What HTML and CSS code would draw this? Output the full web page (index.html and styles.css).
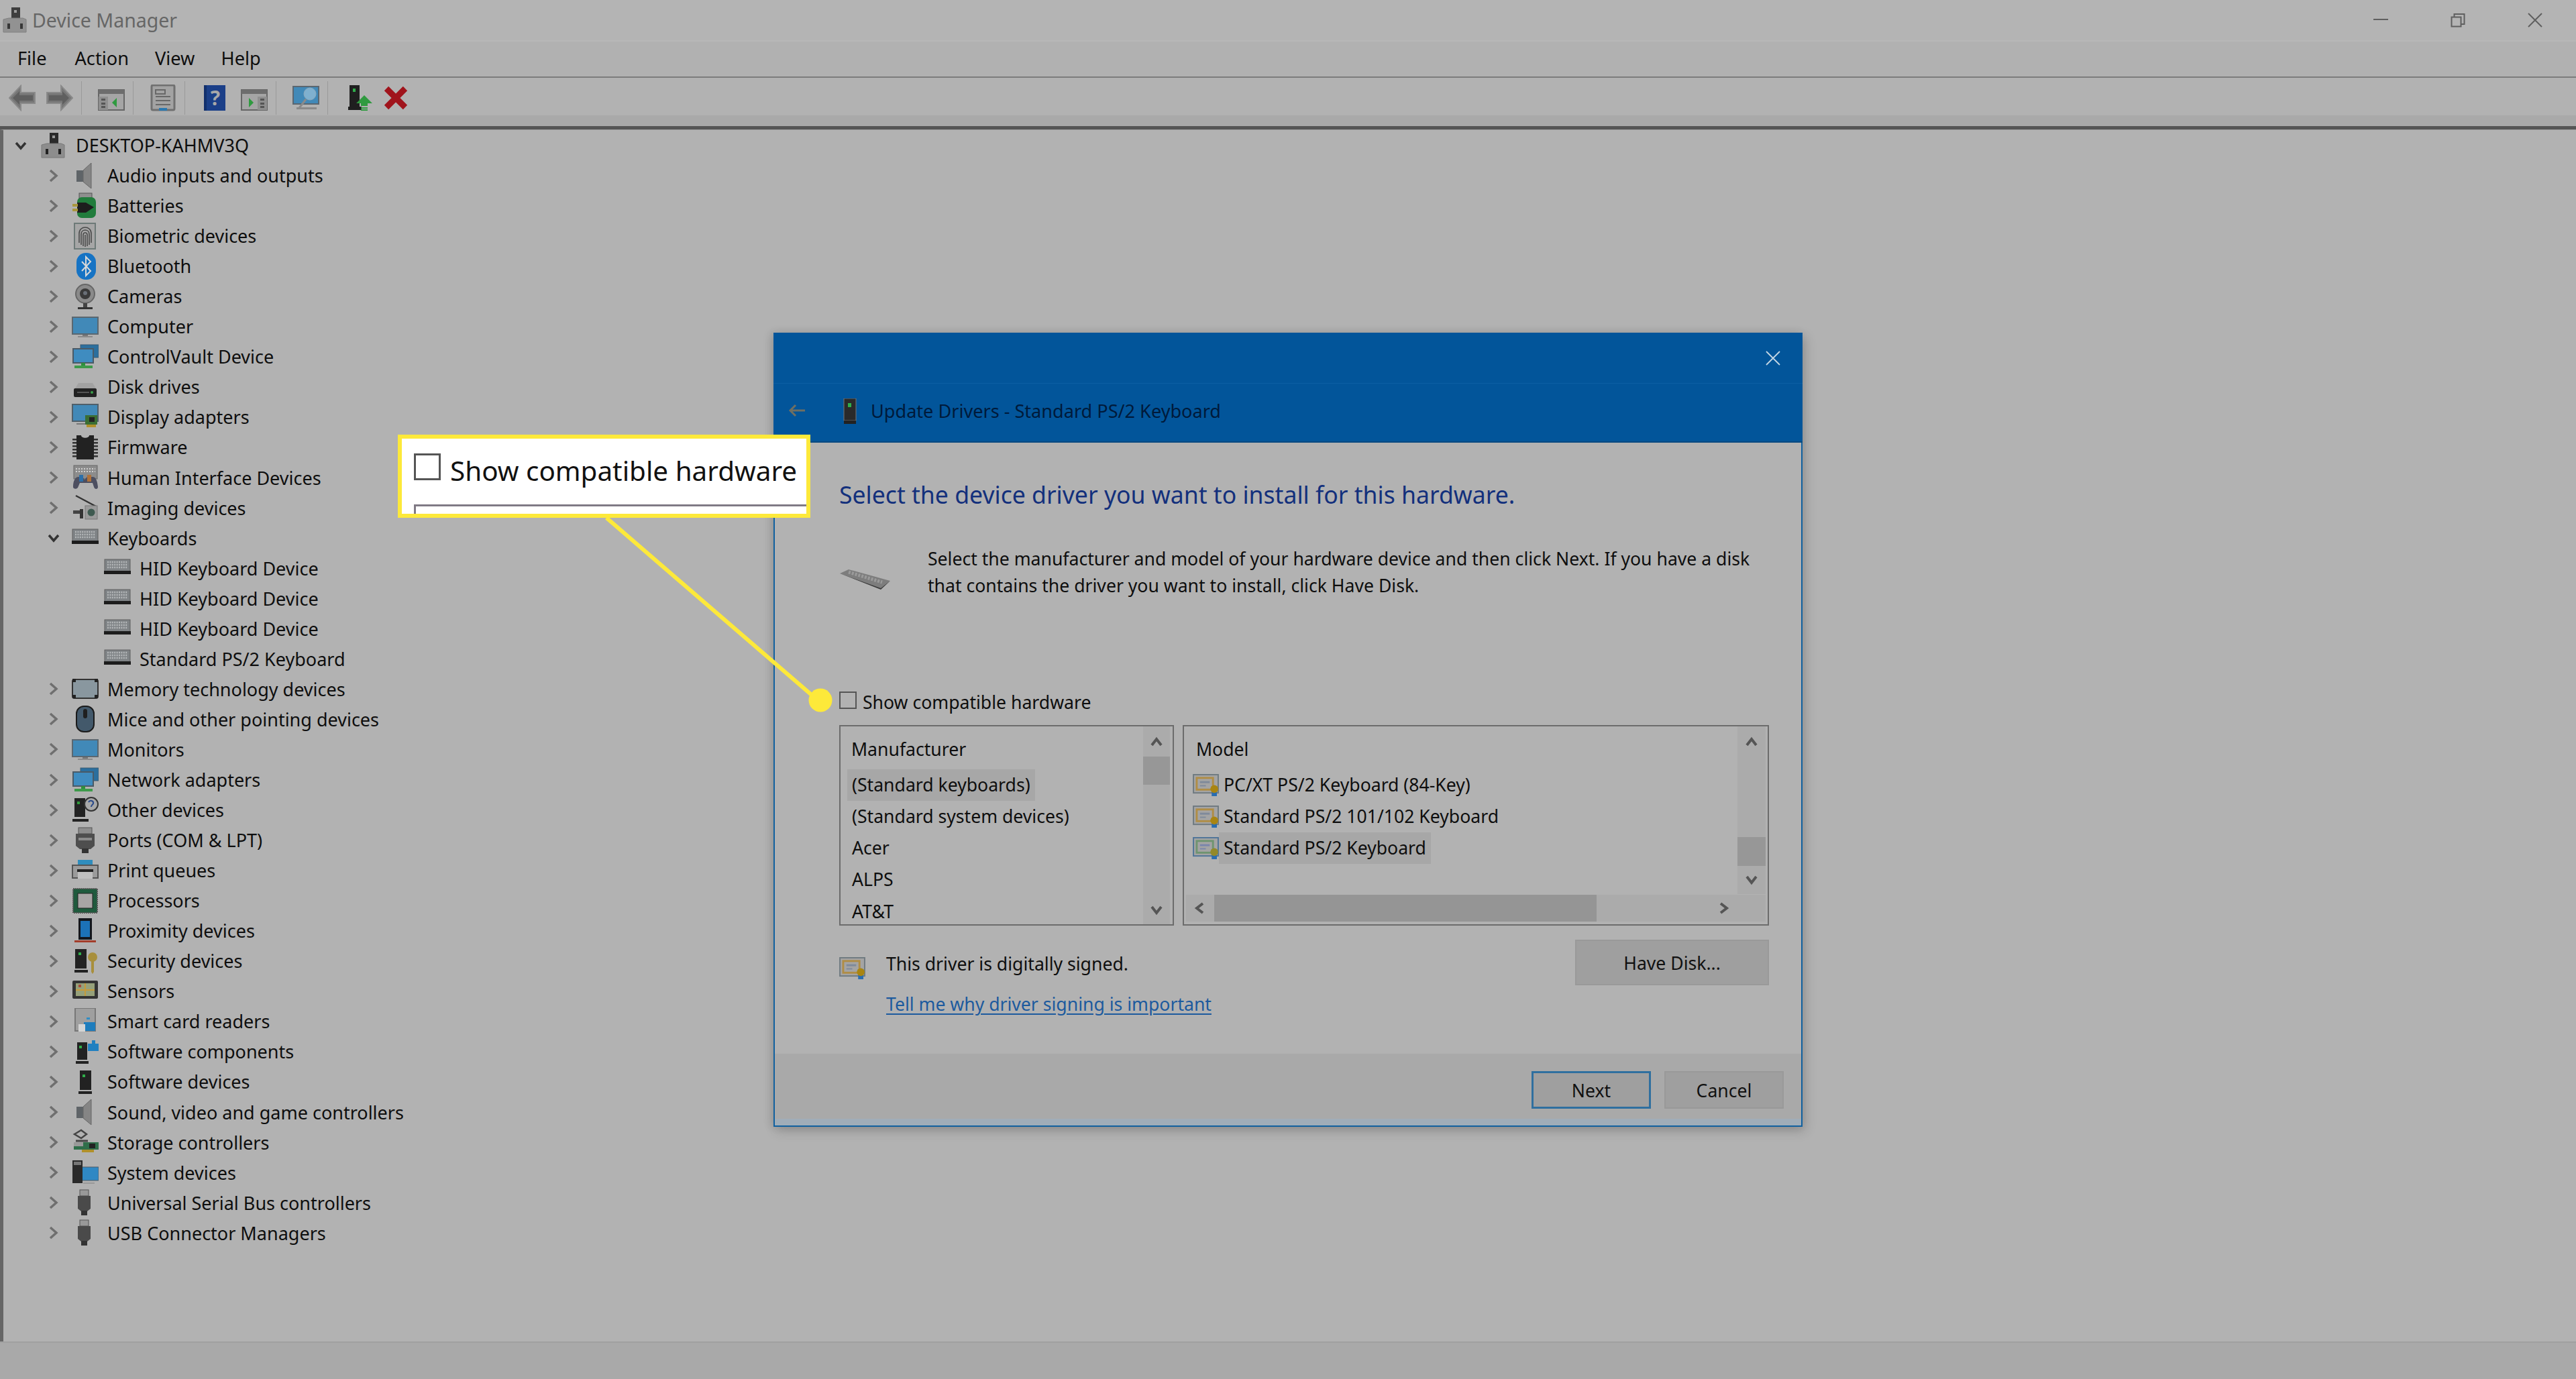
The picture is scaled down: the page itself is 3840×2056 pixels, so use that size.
FILE: index.html
```html
<!DOCTYPE html>
<html lang="en">
<head>
<meta charset="utf-8">
<title>Device Manager</title>
<link rel="stylesheet" href="styles.css">
</head>
<body>
<svg class="defs" aria-hidden="true">
<symbol id="i-root" viewBox="0 0 40 40"><rect x="15" y="1" width="13" height="20" fill="#2a2a2a"/><rect x="19" y="5" width="4" height="4" fill="#999"/><path d="M3 38V19l8-2h21l5 2v19z" fill="#8d8d8d" stroke="#777"/><rect x="9" y="25" width="4" height="8" fill="#222"/><rect x="28" y="25" width="4" height="8" fill="#222"/></symbol>
<symbol id="i-speaker" viewBox="0 0 40 40"><rect x="7" y="12" width="10" height="17" fill="#5f6468"/><path d="M17 12 29 1v38L17 29z" fill="#858585" stroke="#666"/></symbol>
<symbol id="i-battery" viewBox="0 0 40 40"><rect x="11" y="1" width="19" height="9" fill="#8f8f8f" stroke="#555"/><rect x="8" y="7" width="28" height="31" rx="7" fill="#217c3c"/><path d="M8 15h13l12 7-12 8H8z" fill="#1d1d1d"/><rect x="1" y="17" width="8" height="4" fill="#a8963c"/><rect x="1" y="24" width="8" height="4" fill="#a8963c"/></symbol>
<symbol id="i-finger" viewBox="0 0 40 40"><rect x="4" y="1" width="31" height="38" fill="#a6a6a6" stroke="#6d7a78" stroke-width="2"/><g fill="none" stroke="#4a4a4a" stroke-width="1.6"><path d="M11 30V16c0-12 18-12 18 0v14"/><path d="M14 33V17c0-8 12-8 12 0v16"/><path d="M17 35V18c0-4 6-4 6 0v17"/><path d="M20 36V18"/></g></symbol>
<symbol id="i-bt" viewBox="0 0 40 40"><rect x="7" y="0" width="29" height="40" rx="14" fill="#1673c4"/><path d="M15 13l13 14-7 7V6l7 7-13 14" fill="none" stroke="#d8d8d8" stroke-width="2"/></symbol>
<symbol id="i-cam" viewBox="0 0 40 40"><circle cx="20" cy="16" r="14" fill="#8a8a8a" stroke="#666" stroke-width="2"/><circle cx="20" cy="16" r="8" fill="#3a3a3a"/><circle cx="20" cy="15" r="3" fill="#6a7078"/><rect x="17" y="30" width="6" height="6" fill="#444"/><rect x="9" y="36" width="22" height="3" fill="#333"/></symbol>
<symbol id="i-mon" viewBox="0 0 40 40"><rect x="1" y="6" width="38" height="25" fill="#4189b8" stroke="#5b6770" stroke-width="2"/><rect x="16" y="32" width="8" height="2" fill="#777"/><rect x="9" y="34" width="22" height="2" fill="#8a8a8a"/></symbol>
<symbol id="i-net" viewBox="0 0 40 40"><rect x="13" y="2" width="27" height="19" fill="#2b6f9e" stroke="#3a5a70"/><rect x="2" y="8" width="30" height="21" fill="#3f8cc0" stroke="#4a5a66" stroke-width="2"/><rect x="14" y="29" width="6" height="4" fill="#2f8f3f"/><rect x="4" y="33" width="27" height="4" fill="#3d9a4a"/></symbol>
<symbol id="i-disk" viewBox="0 0 40 40"><path d="M5 22 10 14h21l5 8z" fill="#a2a2a2"/><rect x="3" y="22" width="34" height="13" rx="2" fill="#222"/><rect x="8" y="27" width="18" height="2" fill="#555"/><circle cx="30" cy="28" r="2" fill="#3aa04a"/></symbol>
<symbol id="i-disp" viewBox="0 0 40 40"><rect x="1" y="1" width="38" height="25" fill="#4189b8" stroke="#4f5f6a" stroke-width="2"/><rect x="20" y="17" width="18" height="14" fill="#3a6e34"/><rect x="26" y="20" width="8" height="7" fill="#222"/><rect x="22" y="31" width="14" height="4" fill="#b0902a"/><rect x="7" y="29" width="13" height="2" fill="#777"/></symbol>
<symbol id="i-chip" viewBox="0 0 40 40"><path d="M7 2h7c0 5 12 5 12 0h7v36H7z" fill="#222"/><path d="M4 7v28M36 7v28" stroke="#333" stroke-width="6" stroke-dasharray="2.5 2.5"/></symbol>
<symbol id="i-hid" viewBox="0 0 40 40"><rect x="3" y="2" width="35" height="20" fill="#8c8c8c" stroke="#666"/><path d="M6 7h29M6 11h29" stroke="#d0d0d0" stroke-dasharray="2 2" stroke-width="2"/><path d="M2 34c0-9 3-15 8-15h6l3 4 4-4h8c5 0 7 6 8 15 0 4-5 4-6 0l-2-6H12l-3 7c-2 3-7 2-7-1z" fill="#4d4f60"/><rect x="11" y="16" width="6" height="10" fill="#2d6fa8"/><rect x="23" y="16" width="6" height="10" fill="#b0723a"/></symbol>
<symbol id="i-img" viewBox="0 0 40 40"><path d="M6 2 36 18" stroke="#333" stroke-width="2.5"/><rect x="20" y="17" width="18" height="20" fill="#9a9a9a" stroke="#777"/><circle cx="29" cy="27" r="5.5" fill="#3e5a50"/><rect x="2" y="24" width="15" height="5" fill="#444"/><rect x="12" y="22" width="5" height="14" fill="#333"/></symbol>
<symbol id="i-key" viewBox="0 0 40 40"><rect x="1" y="7" width="38" height="21" fill="#7f8386" stroke="#5f5f5f"/><path d="M5 11h30M5 15h30M5 19h30" stroke="#b4b7b9" stroke-width="2.500" stroke-dasharray="2 1.400"/><rect x="0" y="24" width="40" height="5" fill="#1c1c1c"/></symbol>
<symbol id="i-mem" viewBox="0 0 40 40"><rect x="1" y="6" width="38" height="28" rx="3" fill="#89979f" stroke="#333" stroke-width="2"/><rect x="34" y="5" width="5" height="5" fill="#222"/><rect x="34" y="29" width="5" height="5" fill="#222"/><rect x="1" y="29" width="5" height="5" fill="#222"/><rect x="1" y="5" width="5" height="5" fill="#222"/></symbol>
<symbol id="i-mouse" viewBox="0 0 40 40"><rect x="7" y="1" width="26" height="38" rx="11" fill="#43596b" stroke="#1b1b1b" stroke-width="2"/><rect x="17" y="5" width="6" height="14" rx="3" fill="#1f1f1f"/></symbol>
<symbol id="i-other" viewBox="0 0 40 40"><rect x="4" y="2" width="16" height="28" fill="#222"/><rect x="8" y="7" width="4" height="4" fill="#2f9a3a"/><rect x="1" y="33" width="24" height="4" fill="#222"/><circle cx="29" cy="11" r="10" fill="#a8a8a8" stroke="#333" stroke-width="2"/><path d="M25 8c2-4 8-2 7 2-1 2-3 2-3 5" fill="none" stroke="#2a4a8a" stroke-width="2"/></symbol>
<symbol id="i-port" viewBox="0 0 40 40"><rect x="10" y="1" width="20" height="9" fill="#8d8d8d" stroke="#555"/><path d="M6 10h28v18l-6 5H12l-6-5z" fill="#4e4e4e"/><rect x="10" y="16" width="20" height="4" fill="#8a8a8a"/><rect x="15" y="32" width="10" height="7" fill="#333"/></symbol>
<symbol id="i-print" viewBox="0 0 40 40"><rect x="9" y="4" width="22" height="10" fill="#2f8dbd"/><rect x="1" y="12" width="38" height="19" fill="#9b9b9b" stroke="#555" stroke-width="2"/><rect x="8" y="18" width="24" height="4" fill="#222"/><rect x="9" y="22" width="22" height="10" fill="#c0c0c0"/></symbol>
<symbol id="i-cpu" viewBox="0 0 40 40"><rect x="2" y="2" width="36" height="36" fill="#1f5a3d" stroke="#555" stroke-dasharray="2 1" stroke-width="2"/><rect x="9" y="9" width="22" height="22" fill="#a8a5a5" stroke="#222"/></symbol>
<symbol id="i-prox" viewBox="0 0 40 40"><rect x="10" y="1" width="20" height="32" fill="#14171d"/><rect x="13" y="5" width="14" height="24" fill="#1c72b8"/><rect x="4" y="34" width="32" height="3" fill="#a33d2a"/></symbol>
<symbol id="i-sec" viewBox="0 0 40 40"><rect x="5" y="2" width="17" height="29" fill="#222"/><rect x="10" y="7" width="4" height="4" fill="#2fae4a"/><rect x="4" y="33" width="20" height="4" fill="#222"/><circle cx="31" cy="14" r="7" fill="#a88f3c"/><path d="M29 18h4v18l-2 3-2-3z" fill="#a88f3c"/></symbol>
<symbol id="i-sens" viewBox="0 0 40 40"><rect x="1" y="4" width="38" height="27" fill="#333" rx="2"/><rect x="6" y="8" width="28" height="19" fill="#96a17a"/><path d="M6 18h28M20 8v19" stroke="#c59a3a" stroke-width="2"/><rect x="10" y="10" width="4" height="4" fill="#a84a3a"/></symbol>
<symbol id="i-smart" viewBox="0 0 40 40"><rect x="5" y="0" width="30" height="34" fill="#9f9f9f" stroke="#777" stroke-width="2"/><rect x="22" y="14" width="5" height="3" fill="#2f8dc5"/><rect x="18" y="21" width="17" height="13" fill="#1e7dbd"/><rect x="10" y="24" width="10" height="11" fill="#d4d4d4"/></symbol>
<symbol id="i-swc" viewBox="0 0 40 40"><rect x="8" y="6" width="15" height="26" fill="#222"/><rect x="11" y="11" width="4" height="4" fill="#2fae4a"/><rect x="6" y="34" width="19" height="4" fill="#222"/><rect x="24" y="8" width="16" height="11" fill="#2180c0"/><rect x="30" y="3" width="5" height="6" fill="#2180c0"/></symbol>
<symbol id="i-swd" viewBox="0 0 40 40"><rect x="12" y="3" width="17" height="29" fill="#222"/><rect x="16" y="9" width="4" height="4" fill="#2fae4a"/><rect x="10" y="34" width="20" height="4" fill="#222"/></symbol>
<symbol id="i-stor" viewBox="0 0 40 40"><path d="M4 8 14 2l8 6-8 6z" fill="none" stroke="#444" stroke-width="2.5"/><path d="M6 18h18" stroke="#444" stroke-width="3"/><rect x="3" y="20" width="37" height="11" fill="#2f6e4a"/><rect x="3" y="20" width="14" height="6" fill="#999"/><rect x="26" y="22" width="9" height="7" fill="#222"/><rect x="15" y="31" width="18" height="4" fill="#b0902a"/></symbol>
<symbol id="i-sys" viewBox="0 0 40 40"><rect x="10" y="12" width="30" height="20" fill="#2f88c4" stroke="#4c5a64"/><rect x="1" y="2" width="15" height="34" fill="#2a2a2a"/><rect x="3" y="4" width="11" height="5" fill="#777"/><rect x="17" y="35" width="17" height="2" fill="#999"/></symbol>
<symbol id="i-usb" viewBox="0 0 40 40"><rect x="12" y="1" width="13" height="9" fill="#999" stroke="#555"/><path d="M9 10h19v19l-5 4H14l-5-4z" fill="#4a4a4a"/><rect x="14" y="32" width="9" height="7" fill="#333"/></symbol>
<symbol id="i-cert" viewBox="0 0 40 34"><rect x="1" y="1" width="38" height="28" fill="#a4a4a4" stroke="#6f7a80" stroke-width="2"/><rect x="6" y="6" width="25" height="18" fill="none" stroke="#b08d45" stroke-width="3"/><rect x="11" y="11" width="15" height="3" fill="#7f8a9a"/><rect x="11" y="17" width="9" height="2" fill="#7f8a9a"/><rect x="29" y="25" width="8" height="9" fill="#2a6db0"/><circle cx="33" cy="23" r="6" fill="#a98512"/></symbol>
<symbol id="i-cert2" viewBox="0 0 40 34"><rect x="1" y="1" width="38" height="28" fill="#a4a4a4" stroke="#4f7498" stroke-width="2"/><rect x="6" y="6" width="25" height="18" fill="none" stroke="#6f9470" stroke-width="3"/><rect x="11" y="11" width="15" height="3" fill="#7a86ac"/><rect x="11" y="17" width="9" height="2" fill="#7a86ac"/><rect x="29" y="25" width="8" height="9" fill="#2a6db0"/><circle cx="33" cy="23" r="6" fill="#93892a"/></symbol>
<symbol id="i-panel" viewBox="0 0 40 32"><rect x="1" y="1" width="38" height="30" fill="#a5a5a5" stroke="#666" stroke-width="2"/><rect x="1" y="1" width="38" height="6" fill="#6d6d6d"/><rect x="1" y="11" width="14" height="20" fill="#8f8f8f"/><path d="M5 14h6v3H5zM5 20h6v3H5zM5 25h6v3H5z" fill="#555"/></symbol>
<symbol id="chev-r" viewBox="0 0 20 20"><path d="M5 2l9 8-9 8" fill="none" stroke="#6f6f6f" stroke-width="3.500"/></symbol>
</svg>

<div class="window">
  <header class="titlebar">
    <svg class="title-ico"><use href="#i-root"/></svg>
    <span class="title-text">Device Manager</span>
    <div class="win-controls">
      <svg class="wc" viewBox="0 0 22 22"><path d="M0 10h22" stroke="#5f5f5f" stroke-width="2"/></svg>
      <svg class="wc" viewBox="0 0 22 22"><path d="M1.500 6.500h14v14h-14zM5.500 6V2h15v15h-4.500" fill="none" stroke="#5f5f5f" stroke-width="2"/></svg>
      <svg class="wc" viewBox="0 0 22 22"><path d="M1 1l20 20M21 1 1 21" stroke="#5f5f5f" stroke-width="2"/></svg>
    </div>
  </header>
  <nav class="menubar">
    <span class="mi mi-file">File</span><span class="mi mi-action">Action</span><span class="mi mi-view">View</span><span class="mi">Help</span>
  </nav>
  <div class="toolbar">
    <div class="tb-group first">
      <svg class="tb" viewBox="0 0 40 40"><path d="M1 20 18 2v10h21v16H18v10z" fill="#777" stroke="#8a8a8a" stroke-width="2"/><path d="M6 20 16 10v6h20v8H16v6z" fill="#5f5f5f"/></svg>
      <svg class="tb" viewBox="0 0 40 40"><path d="M39 20 22 2v10H1v16h21v10z" fill="#777" stroke="#8a8a8a" stroke-width="2"/><path d="M34 20 24 10v6H4v8h20v6z" fill="#5f5f5f"/></svg>
    </div>
    <i class="sep"></i>
    <div class="tb-group">
      <svg class="tb" viewBox="0 0 40 40"><use href="#i-panel" y="7" width="40" height="32"/><path d="M28 20l-7 7 7 7z" fill="#2f9a3f"/></svg>
    </div>
    <i class="sep"></i>
    <div class="tb-group">
      <svg class="tb" viewBox="0 0 40 40"><rect x="3" y="1" width="34" height="37" rx="2" fill="#a3a3a3" stroke="#707070" stroke-width="3"/><path d="M9 8h14v6H9zM9 18h22M9 24h22M9 30h22" fill="none" stroke="#686868" stroke-width="2"/><rect x="14" y="35" width="12" height="4" fill="#2b78b0"/></svg>
    </div>
    <i class="sep"></i>
    <div class="tb-group wide">
      <svg class="tb" viewBox="0 0 40 40"><rect x="4" y="1" width="32" height="38" fill="#1b3f88"/><rect x="4" y="1" width="4" height="38" fill="#12306c"/><text class="tb-q" x="21" y="31">?</text></svg>
      <svg class="tb" viewBox="0 0 40 40"><g transform="matrix(-1 0 0 1 40 0)"><use href="#i-panel" y="7" width="40" height="32"/></g><path d="M12 20l7 7-7 7z" fill="#2f9a3f"/></svg>
    </div>
    <i class="sep"></i>
    <div class="tb-group">
      <svg class="tb" viewBox="0 0 40 40"><rect x="1" y="3" width="38" height="26" fill="#4189b8" stroke="#5b6770" stroke-width="2"/><circle cx="26" cy="14" r="9" fill="#7fb0cf" stroke="#8fa9ba"/><path d="M20 22 10 35" stroke="#8a8a8a" stroke-width="3"/><rect x="6" y="34" width="30" height="3" fill="#8a8a8a"/></svg>
    </div>
    <i class="sep"></i>
    <div class="tb-group close">
      <svg class="tb" viewBox="0 0 40 40"><rect x="5" y="1" width="15" height="32" fill="#1f1f1f"/><rect x="10" y="6" width="4" height="5" fill="#2fae4a"/><rect x="3" y="33" width="20" height="5" fill="#1f1f1f"/><path d="M27 16l12 12h-7v4H22v-4h-7z" fill="#2f9a3f"/><rect x="22" y="34" width="10" height="2" fill="#2f9a3f"/><rect x="22" y="37" width="10" height="2" fill="#2f9a3f"/></svg>
      <svg class="tb" viewBox="0 0 40 40"><path d="M6 6l28 28M34 6 6 34" stroke="#a0141c" stroke-width="9"/></svg>
    </div>
  </div>
  <div class="toolbar-foot"></div>

  <main class="tree">
    <div class="row root"><svg class="chev" viewBox="0 0 20 20"><path d="M3 6l7 8 7-8" fill="none" stroke="#333" stroke-width="3.500"/></svg><svg class="ico"><use href="#i-root"/></svg><span>DESKTOP-KAHMV3Q</span></div>
    <div class="row"><svg class="chev c"><use href="#chev-r"/></svg><svg class="ico"><use href="#i-speaker"/></svg><span>Audio inputs and outputs</span></div>
    <div class="row"><svg class="chev c"><use href="#chev-r"/></svg><svg class="ico"><use href="#i-battery"/></svg><span>Batteries</span></div>
    <div class="row"><svg class="chev c"><use href="#chev-r"/></svg><svg class="ico"><use href="#i-finger"/></svg><span>Biometric devices</span></div>
    <div class="row"><svg class="chev c"><use href="#chev-r"/></svg><svg class="ico"><use href="#i-bt"/></svg><span>Bluetooth</span></div>
    <div class="row"><svg class="chev c"><use href="#chev-r"/></svg><svg class="ico"><use href="#i-cam"/></svg><span>Cameras</span></div>
    <div class="row"><svg class="chev c"><use href="#chev-r"/></svg><svg class="ico"><use href="#i-mon"/></svg><span>Computer</span></div>
    <div class="row"><svg class="chev c"><use href="#chev-r"/></svg><svg class="ico"><use href="#i-net"/></svg><span>ControlVault Device</span></div>
    <div class="row"><svg class="chev c"><use href="#chev-r"/></svg><svg class="ico"><use href="#i-disk"/></svg><span>Disk drives</span></div>
    <div class="row"><svg class="chev c"><use href="#chev-r"/></svg><svg class="ico"><use href="#i-disp"/></svg><span>Display adapters</span></div>
    <div class="row"><svg class="chev c"><use href="#chev-r"/></svg><svg class="ico"><use href="#i-chip"/></svg><span>Firmware</span></div>
    <div class="row"><svg class="chev c"><use href="#chev-r"/></svg><svg class="ico"><use href="#i-hid"/></svg><span>Human Interface Devices</span></div>
    <div class="row"><svg class="chev c"><use href="#chev-r"/></svg><svg class="ico"><use href="#i-img"/></svg><span>Imaging devices</span></div>
    <div class="row"><svg class="chev" viewBox="0 0 20 20"><path d="M3 6l7 8 7-8" fill="none" stroke="#333" stroke-width="3.500"/></svg><svg class="ico"><use href="#i-key"/></svg><span>Keyboards</span></div>
    <div class="row child"><svg class="ico"><use href="#i-key"/></svg><span>HID Keyboard Device</span></div>
    <div class="row child"><svg class="ico"><use href="#i-key"/></svg><span>HID Keyboard Device</span></div>
    <div class="row child"><svg class="ico"><use href="#i-key"/></svg><span>HID Keyboard Device</span></div>
    <div class="row child"><svg class="ico"><use href="#i-key"/></svg><span>Standard PS/2 Keyboard</span></div>
    <div class="row"><svg class="chev c"><use href="#chev-r"/></svg><svg class="ico"><use href="#i-mem"/></svg><span>Memory technology devices</span></div>
    <div class="row"><svg class="chev c"><use href="#chev-r"/></svg><svg class="ico"><use href="#i-mouse"/></svg><span>Mice and other pointing devices</span></div>
    <div class="row"><svg class="chev c"><use href="#chev-r"/></svg><svg class="ico"><use href="#i-mon"/></svg><span>Monitors</span></div>
    <div class="row"><svg class="chev c"><use href="#chev-r"/></svg><svg class="ico"><use href="#i-net"/></svg><span>Network adapters</span></div>
    <div class="row"><svg class="chev c"><use href="#chev-r"/></svg><svg class="ico"><use href="#i-other"/></svg><span>Other devices</span></div>
    <div class="row"><svg class="chev c"><use href="#chev-r"/></svg><svg class="ico"><use href="#i-port"/></svg><span>Ports (COM &amp; LPT)</span></div>
    <div class="row"><svg class="chev c"><use href="#chev-r"/></svg><svg class="ico"><use href="#i-print"/></svg><span>Print queues</span></div>
    <div class="row"><svg class="chev c"><use href="#chev-r"/></svg><svg class="ico"><use href="#i-cpu"/></svg><span>Processors</span></div>
    <div class="row"><svg class="chev c"><use href="#chev-r"/></svg><svg class="ico"><use href="#i-prox"/></svg><span>Proximity devices</span></div>
    <div class="row"><svg class="chev c"><use href="#chev-r"/></svg><svg class="ico"><use href="#i-sec"/></svg><span>Security devices</span></div>
    <div class="row"><svg class="chev c"><use href="#chev-r"/></svg><svg class="ico"><use href="#i-sens"/></svg><span>Sensors</span></div>
    <div class="row"><svg class="chev c"><use href="#chev-r"/></svg><svg class="ico"><use href="#i-smart"/></svg><span>Smart card readers</span></div>
    <div class="row"><svg class="chev c"><use href="#chev-r"/></svg><svg class="ico"><use href="#i-swc"/></svg><span>Software components</span></div>
    <div class="row"><svg class="chev c"><use href="#chev-r"/></svg><svg class="ico"><use href="#i-swd"/></svg><span>Software devices</span></div>
    <div class="row"><svg class="chev c"><use href="#chev-r"/></svg><svg class="ico"><use href="#i-speaker"/></svg><span>Sound, video and game controllers</span></div>
    <div class="row"><svg class="chev c"><use href="#chev-r"/></svg><svg class="ico"><use href="#i-stor"/></svg><span>Storage controllers</span></div>
    <div class="row"><svg class="chev c"><use href="#chev-r"/></svg><svg class="ico"><use href="#i-sys"/></svg><span>System devices</span></div>
    <div class="row"><svg class="chev c"><use href="#chev-r"/></svg><svg class="ico"><use href="#i-usb"/></svg><span>Universal Serial Bus controllers</span></div>
    <div class="row"><svg class="chev c"><use href="#chev-r"/></svg><svg class="ico"><use href="#i-usb"/></svg><span>USB Connector Managers</span></div>
  </main>
  <footer class="statusbar"></footer>
</div>

<section class="dialog">
  <div class="dlg-top"><svg class="dlg-x" viewBox="0 0 22 22"><path d="M1 1l20 20M21 1 1 21" stroke="#c4d6e4" stroke-width="1.800"/></svg></div>
  <div class="dlg-head">
    <svg class="dlg-back" viewBox="0 0 26 20"><path d="M11 2 3 10l8 8M3 10h22" fill="none" stroke="#6f6f62" stroke-width="3"/></svg>
    <svg class="dlg-dev" viewBox="0 0 20 38"><rect x="1" y="0" width="18" height="33" fill="#2a2a2a" stroke="#777"/><rect x="7" y="7" width="5" height="6" fill="#2fae4a"/><rect x="1" y="33" width="18" height="5" fill="#222"/></svg>
    <span class="dlg-title">Update Drivers - Standard PS/2 Keyboard</span>
  </div>
  <div class="dlg-body">
    <h1 class="heading">Select the device driver you want to install for this hardware.</h1>
    <div class="intro">
      <svg class="kb-art" viewBox="0 0 76 30"><path d="M1 6 14 0l62 17-14 12z" fill="#7d7d7d"/><path d="M1 6l61 22 14-11-14 13z" fill="#3a3a3a"/><path d="M14 4l50 15" stroke="#9a9a9a" stroke-width="5" stroke-dasharray="3 2"/></svg>
      <p class="intro-text">Select the manufacturer and model of your hardware device and then click Next. If you have a disk<br>that contains the driver you want to install, click Have Disk.</p>
    </div>
    <label class="compat"><span class="cb"></span><span>Show compatible hardware</span></label>
    <div class="lists">
      <div class="list list-left">
        <div class="items">
          <div class="col-head">Manufacturer</div>
          <div class="item"><span class="sel">(Standard keyboards)</span></div>
          <div class="item"><span class="plain">(Standard system devices)</span></div>
          <div class="item"><span class="plain">Acer</span></div>
          <div class="item"><span class="plain">ALPS</span></div>
          <div class="item"><span class="plain">AT&amp;T</span></div>
        </div>
        <div class="vscroll">
          <div class="sb-btn"><svg class="arr" viewBox="0 0 20 20"><path d="M3 15 10 6l7 9" fill="none" stroke="#555" stroke-width="4"/></svg></div>
          <div class="thumb"></div>
          <div class="sb-btn end"><svg class="arr" viewBox="0 0 20 20"><path d="M3 5l7 9 7-9" fill="none" stroke="#555" stroke-width="4"/></svg></div>
        </div>
      </div>
      <div class="list list-right">
        <div class="list-top">
          <div class="items">
            <div class="col-head">Model</div>
            <div class="item"><svg class="cert"><use href="#i-cert"/></svg><span class="plain">PC/XT PS/2 Keyboard (84-Key)</span></div>
            <div class="item"><svg class="cert"><use href="#i-cert"/></svg><span class="plain">Standard PS/2 101/102 Keyboard</span></div>
            <div class="item"><svg class="cert"><use href="#i-cert2"/></svg><span class="sel">Standard PS/2 Keyboard</span></div>
          </div>
          <div class="vscroll">
            <div class="sb-btn"><svg class="arr" viewBox="0 0 20 20"><path d="M3 15 10 6l7 9" fill="none" stroke="#555" stroke-width="4"/></svg></div>
            <div class="thumb low"></div>
            <div class="sb-btn"><svg class="arr" viewBox="0 0 20 20"><path d="M3 5l7 9 7-9" fill="none" stroke="#555" stroke-width="4"/></svg></div>
          </div>
        </div>
        <div class="hscroll">
          <div class="hs-btn"><svg class="arr" viewBox="0 0 20 20"><path d="M14 3 5 10l9 7" fill="none" stroke="#555" stroke-width="4"/></svg></div>
          <div class="hthumb"></div>
          <div class="hs-btn end"><svg class="arr" viewBox="0 0 20 20"><path d="M6 3l9 7-9 7" fill="none" stroke="#555" stroke-width="4"/></svg></div>
          <div class="hs-corner"></div>
        </div>
      </div>
    </div>
    <div class="sign">
      <svg class="sign-ico"><use href="#i-cert"/></svg>
      <div class="sign-text">
        <div>This driver is digitally signed.</div>
        <a class="link">Tell me why driver signing is important</a>
      </div>
      <button class="btn disk">Have Disk...</button>
    </div>
  </div>
  <div class="dlg-foot">
    <button class="btn foot primary">Next</button>
    <button class="btn foot">Cancel</button>
  </div>
</section>

<svg class="leader" viewBox="0 0 345 300"><path d="M5 2 320 274" stroke="#fde93a" stroke-width="6"/><ellipse cx="324" cy="274" rx="17.500" ry="17.500" fill="#fde93a"/></svg>

<aside class="callout">
  <div class="callout-row"><span class="callout-cb"></span><span>Show compatible hardware</span></div>
  <div class="callout-frag"></div>
</aside>
</body>
</html>
```

FILE: styles.css
```css
* { box-sizing: border-box; }
html, body { margin: 0; padding: 0; }
body {
  position: relative;
  width: 3840px;
  height: 2056px;
  overflow: hidden;
  background: #b2b2b2;
  font-family: "Noto Sans", "Open Sans", sans-serif;
  font-size: 27px;
  color: #0e0e0e;
}
.defs { position: absolute; width: 0; height: 0; }

.window { display: flex; flex-direction: column; height: 2056px; }

.titlebar { display: flex; align-items: center; height: 60px; padding-left: 2px; background: #b4b4b4; flex: none; }
.title-ico { width: 40px; height: 40px; margin-right: 6px; opacity: .85; }
.title-text { color: #666; line-height: 60px; font-size: 28.500px; }
.win-controls { margin-left: auto; display: flex; gap: 93px; padding-right: 50px; }
.wc { width: 22px; height: 22px; }

.menubar { display: flex; align-items: center; height: 56px; padding-left: 26px; padding-bottom: 2px; background: #b1b1b1; border-top: 2px solid #b8b8b8; border-bottom: 2px solid #7c7c7c; flex: none; font-size: 27.200px; }
.mi { line-height: 50px; }
.mi-file { margin-right: 42px; }
.mi-action { margin-right: 39px; }
.mi-view { margin-right: 39px; }

.toolbar { display: flex; align-items: center; gap: 12px; height: 56px; padding-top: 3px; background: #b2b2b2; flex: none; }
.tb-group { display: flex; gap: 16px; padding-left: 12px; }
.tb-group.first { padding-left: 13px; }
.tb-group.wide { gap: 19px; }
.tb-group.close { gap: 14px; padding-left: 15px; }
.tb { width: 40px; height: 40px; }
.tb-q { font-size: 30px; font-weight: 700; fill: #a8a8a8; text-anchor: middle; }
.sep { width: 1px; height: 50px; background: #9a9a9a; }
.toolbar-foot { height: 21px; flex: none; background: linear-gradient(#a9a9a9 0 16px, #555 16px); }

.tree { flex: 1; padding-left: 0; border-left: 5px solid #666; border-top: 1px solid #a0a0a0; overflow: hidden; }
.row { display: flex; align-items: center; height: 45.050px; padding-left: 63px; white-space: nowrap; }
.row.root { padding-left: 14px; }
.row.child { padding-left: 150px; }
.chev { width: 24px; height: 20px; flex: none; margin-right: 15px; }
.ico { width: 40px; height: 40px; flex: none; margin-right: 13px; }
.row.root .chev { margin-right: 16px; }
.row.root .ico { margin-right: 14px; }
.statusbar { height: 56px; flex: none; background: #a9a9a9; border-top: 2px solid #a0a0a0; }

.dialog {
  position: absolute; left: 1153px; top: 496px; width: 1534px; height: 1184px;
  display: flex; flex-direction: column;
  font-size: 26.600px;
  background: #b2b2b2; border: 2px solid #10609f; border-top: none;
  box-shadow: 4px 6px 16px rgba(0, 0, 0, .18), -4px 0 12px rgba(0, 0, 0, .1);
}
.dlg-top { height: 76px; flex: none; background: #02559a; margin: 0 -2px; display: flex; align-items: center; justify-content: flex-end; padding-right: 33px; border-bottom: 1px solid #0b5fa3; }
.dlg-x { width: 22px; height: 22px; }
.dlg-head { height: 88px; flex: none; background: #02559a; margin: 0 -2px; display: flex; align-items: center; padding: 0 0 4px 22px; border-bottom: 2px solid #0a4a80; }
.dlg-back { width: 26px; height: 20px; margin-right: 56px; margin-bottom: 2px; }
.dlg-dev { width: 20px; height: 38px; margin-right: 21px; }
.dlg-title { color: #001a3a; line-height: 40px; font-size: 27.100px; }

.dlg-body { flex: 1; padding-left: 96px; padding-right: 48px; }
.heading { margin: 47px 0 0; font-size: 35.600px; font-weight: 400; line-height: 60px; color: #13307c; white-space: nowrap; }
.intro { display: flex; margin-top: 46px; }
.kb-art { width: 76px; height: 30px; margin: 36px 56px 0 0; flex: none; }
.intro-text { margin: 0; line-height: 40px; white-space: nowrap; }
.compat { display: flex; align-items: flex-start; gap: 9px; height: 40px; margin-top: 131px; line-height: 46px; white-space: nowrap; }
.compat .cb { width: 26px; height: 26px; margin-top: 7px; border: 2px solid #555; flex: none; }

.lists { display: flex; gap: 13px; margin-top: 17px; height: 299px; }
.list { border: 2px solid #6c6c6c; overflow: hidden; }
.list-left { width: 499px; display: flex; padding-right: 4px; }
.list-right { width: 874px; display: flex; flex-direction: column; }
.list-top { display: flex; height: 250px; padding-right: 3px; }
.items { flex: 1; padding: 11px 0 0 10px; overflow: hidden; }
.col-head { height: 52.400px; line-height: 46px; padding-left: 6px; }
.item { display: flex; align-items: center; height: 47.300px; white-space: nowrap; }
.sel { background: #a7a7a7; padding: 0 7px; line-height: 47px; }
.plain { padding: 0 7px; line-height: 47px; }
.list-right .items { padding-left: 13px; }
.list-right .col-head { padding-left: 5px; }
.cert { width: 39px; height: 33px; flex: none; }

.vscroll { width: 40px; display: flex; flex-direction: column; background: #ababab; flex: none; }
.list-right .vscroll { width: 42px; }
.sb-btn { height: 45px; flex: none; display: flex; align-items: center; justify-content: center; }
.sb-btn.end { margin-top: auto; height: 43px; }
.thumb { height: 42px; flex: none; background: #979797; }
.thumb.low { margin-top: auto; height: 43px; }
.list-right .sb-btn:last-child { height: 42px; }
.arr { width: 20px; height: 20px; }

.hscroll { display: flex; height: 40px; margin: 1px 3px 0 3px; background: #ababab; }
.hs-btn { width: 42px; flex: none; display: flex; align-items: center; justify-content: center; }
.hs-btn.end { margin-left: auto; }
.hs-corner { width: 42px; flex: none; }
.hthumb { width: 570px; background: #959595; }

.sign { display: flex; margin-top: 21px; }
.sign-ico { width: 39px; height: 33px; margin: 26px 31px 0 0; flex: none; }
.sign-text { padding-top: 16px; line-height: 40px; flex: 1; }
.link { display: inline-block; margin-top: 20px; color: #1c5a9e; text-decoration: underline; text-underline-offset: 4px; }

.btn { font: inherit; color: #111; background: #9f9f9f; border: 2px solid #999; padding: 2px 0 0; }
.btn.disk { width: 289px; height: 68px; flex: none; }
.dlg-foot { display: flex; justify-content: flex-end; gap: 20px; height: 107px; flex: none; padding: 26px 26px 0 0; background: linear-gradient(#a9a9a9 0 97px, #a0adb8 97px); }
.btn.foot { width: 178px; height: 56px; }
.btn.primary { border: 3px solid #2f6f9f; }

.leader { position: absolute; left: 899px; top: 770px; width: 345px; height: 300px; }

.callout { position: absolute; left: 593px; top: 648px; width: 615px; height: 124px; background: #fff; border: 6px solid #fde93a; padding: 18px 0 0 18px; overflow: hidden; color: #111; }
.callout-row { display: flex; align-items: flex-start; gap: 14px; font-size: 40.400px; line-height: 60px; white-space: nowrap; }
.callout-cb { width: 40px; height: 40px; margin-top: 4px; border: 3px solid #555; flex: none; }
.callout-frag { height: 20px; margin-top: 20px; border-left: 3px solid #807a85; border-top: 3px solid #807a85; }
```
